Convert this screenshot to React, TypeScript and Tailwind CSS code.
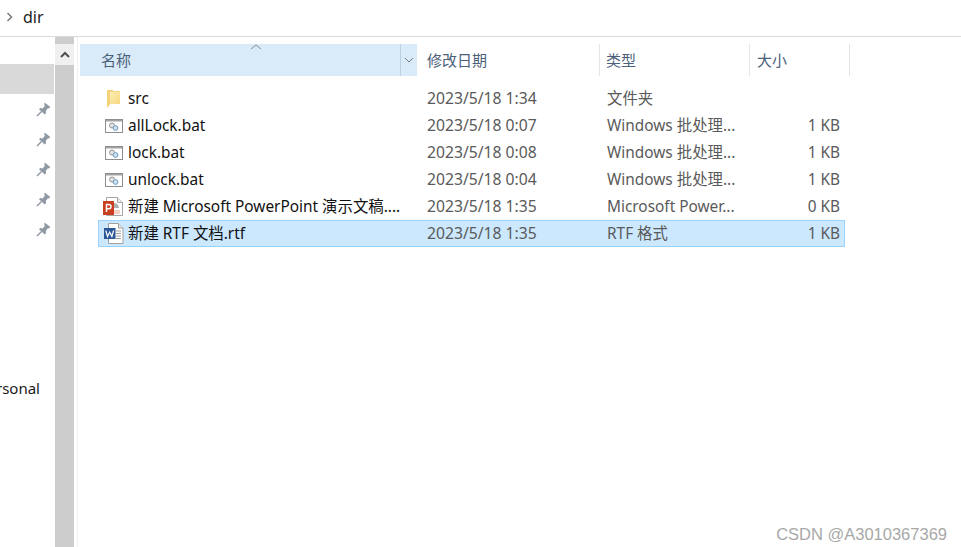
const font = { fontFamily: '"Noto Sans", "Noto Sans CJK SC", sans-serif' };

function PinIcon() {
  return (
    <svg width="15" height="15" viewBox="0 0 15 15" className="text-[#8e99a3]">
      <path d="M8.600.6 14.300 5l-1.300 1.400-1-.2-2.200 2.600.2 2.500-1.200 1.200L3 7.300l1.200-1.200 2.400.3 2.300-2.600-.6-1.200z" fill="currentColor" />
      <path d="M5.500 9.500 1 14" stroke="currentColor" strokeWidth="1.500" />
    </svg>
  );
}

function FolderIcon() {
  return (
    <svg width="13" height="18" viewBox="0 0 13 18">
      <defs>
        <linearGradient id="folder-front" x1="0" y1="0" x2="1" y2="1">
          <stop offset="0" stopColor="#fdeeb6" />
          <stop offset="1" stopColor="#f6d77f" />
        </linearGradient>
      </defs>
      <path d="M0.500 0h5l1 1H13v13H3l-2.500 3.500z" fill="#eec766" />
      <path d="M3 1.500h10V14H3z" fill="url(#folder-front)" />
      <path d="M0 0h3v14l-2.500 3.500H0z" fill="#f3d27a" />
    </svg>
  );
}

function BatIcon() {
  return (
    <svg width="18" height="14" viewBox="0 0 18 14">
      <rect x="0.500" y="0.500" width="17" height="13" fill="#fff" stroke="#8e8e8e" />
      <rect x="1" y="1" width="16" height="1.500" fill="#a3a3a3" />
      <circle cx="7" cy="6.500" r="2.500" fill="#e4e4e4" stroke="#959595" />
      <circle cx="10.500" cy="9" r="2.400" fill="#cfe0ee" stroke="#6f9cc0" />
    </svg>
  );
}

function PptIcon() {
  return (
    <svg width="21" height="20" viewBox="0 0 21 20">
      <path d="M3.500 0.500h11l5 5v13h-16z" fill="#fff" stroke="#a5a5a5" />
      <path d="M14.500 0.500v5h5" fill="#ececec" stroke="#a5a5a5" />
      <path d="M11 6v5h5a5 5 0 0 0-5-5z" fill="#b0b0b0" />
      <path d="M11 14h6M11 16h6" stroke="#e9a58d" strokeWidth="1.200" />
      <rect x="0" y="4" width="11" height="14" fill="#c8401f" />
      <path d="M3.500 15V7.500h2.400a2 2 0 0 1 0 4.200H3.500" fill="none" stroke="#fff" strokeWidth="1.500" />
    </svg>
  );
}

function WordIcon() {
  return (
    <svg width="20" height="21" viewBox="0 0 20 21">
      <path d="M4.500 0.500h10l4.500 4.500v15.500h-14.500z" fill="#fff" stroke="#a0a0a0" />
      <path d="M14.500 0.500v4.500h4.500" fill="#ececec" stroke="#a0a0a0" />
      <path d="M12 8h5M12 10.500h5M12 13h5M12 15.500h5" stroke="#a0a0a0" />
      <rect x="0" y="5" width="11.500" height="11" fill="#2b5797" />
      <path d="M1.800 7.500l1.700 6 2.200-4.500 2.200 4.500 1.700-6" fill="none" stroke="#fff" strokeWidth="1.200" />
    </svg>
  );
}

const rows = [
  { name: "src", date: "2023/5/18 1:34", type: "文件夹", size: "", icon: <FolderIcon /> },
  { name: "allLock.bat", date: "2023/5/18 0:07", type: "Windows 批处理...", size: "1 KB", icon: <BatIcon /> },
  { name: "lock.bat", date: "2023/5/18 0:08", type: "Windows 批处理...", size: "1 KB", icon: <BatIcon /> },
  { name: "unlock.bat", date: "2023/5/18 0:04", type: "Windows 批处理...", size: "1 KB", icon: <BatIcon /> },
  { name: "新建 Microsoft PowerPoint 演示文稿....", date: "2023/5/18 1:35", type: "Microsoft Power...", size: "0 KB", icon: <PptIcon /> },
  { name: "新建 RTF 文档.rtf", date: "2023/5/18 1:35", type: "RTF 格式", size: "1 KB", icon: <WordIcon />, selected: true },
];

export default function App() {
  return (
    <div className="relative h-[547px] w-[961px] overflow-hidden bg-white text-[15.4px] text-black" style={font}>
      {/* address bar */}
      <div className="flex h-[37px] items-center border-b border-[#d9d9d9] pb-[2px]">
        <svg width="8" height="10" viewBox="0 0 8 10" className="ml-[6px]">
          <path d="M1.500 1 5.500 5 1.500 9" fill="none" stroke="#7a7a7a" strokeWidth="1.500" />
        </svg>
        <span className="ml-[9px] text-[16px] text-[#222]">dir</span>
      </div>

      <div className="flex h-[510px]">
        {/* nav pane */}
        <div className="flex w-[55px] shrink-0 flex-col overflow-hidden pt-[27px]">
          <div className="h-[30px] w-[54px] shrink-0 bg-[#d9d9d9]" />
          <div className="flex flex-col items-end pr-[4px]">
            {[0, 1, 2, 3, 4].map((i) => (
              <div key={i} className="flex h-[30px] w-full items-center justify-end">
                <PinIcon />
              </div>
            ))}
          </div>
          <div className="mt-[133px] flex w-[40px] justify-end text-[15px] text-[#1a1a1a]">
            <span className="whitespace-nowrap">rsonal</span>
          </div>
        </div>

        {/* scrollbar */}
        <div className="flex w-[19px] shrink-0 flex-col bg-[#cdcdcd] pt-[7px]">
          <div className="flex h-[21px] items-center justify-center bg-[#f0f0f0]">
            <svg width="10" height="7" viewBox="0 0 10 7">
              <path d="M1 6 5 2l4 4" fill="none" stroke="#505050" strokeWidth="2" />
            </svg>
          </div>
        </div>
        <div className="ml-[3px] w-px shrink-0 bg-[#f0f0f0]" />

        {/* file list */}
        <div className="ml-[2px] flex-1 pt-[7px]">
          <div className="flex h-[32px] text-[15px] text-[#4c607a]">
            <div className="relative flex w-[337px] items-center bg-[#d9ebf9] pl-[21px]">
              名称
              <svg width="12" height="6" viewBox="0 0 12 6" className="absolute left-[170px] top-0">
                <path d="M1 5 6 1l5 4" fill="none" stroke="#8a8a8a" />
              </svg>
              <div className="absolute right-0 top-0 flex h-full w-[17px] items-center justify-center border-l border-[#bcd0e2]">
                <svg width="10" height="6" viewBox="0 0 10 6">
                  <path d="M1 1l4 4 4-4" fill="none" stroke="#7a7a7a" />
                </svg>
              </div>
            </div>
            <div className="flex w-[183px] items-center border-r border-[#e5e5e5] pl-[10px]">修改日期</div>
            <div className="flex w-[150px] items-center border-r border-[#e5e5e5] pl-[6px]">类型</div>
            <div className="flex w-[100px] items-center border-r border-[#e5e5e5] pl-[7px]">大小</div>
          </div>

          <div className="ml-[18px] mt-[9px] flex w-[747px] flex-col">
            {rows.map((r) => (
              <div
                key={r.name}
                className={
                  r.selected
                    ? "flex h-[27px] items-center border border-[#99d1ff] bg-[#cce8ff] text-[#111]"
                    : "flex h-[27px] items-center border border-transparent text-[#111]"
                }
              >
                <div className="flex w-[29px] shrink-0 justify-center">{r.icon}</div>
                <div className="w-[299px] shrink-0 overflow-hidden whitespace-nowrap">{r.name}</div>
                <div className="w-[180px] shrink-0 text-[15.7px] text-[#5a5a5a]">{r.date}</div>
                <div className="w-[153px] shrink-0 whitespace-nowrap text-[#5a5a5a]">{r.type}</div>
                <div className="w-[80px] shrink-0 text-right text-[#5a5a5a]">{r.size}</div>
              </div>
            ))}
          </div>
        </div>
      </div>

      {/* watermark */}
      <div
        className="absolute right-[14px] top-[522px] text-[16.5px] text-[#a8a8a8]"
        style={{ fontFamily: '"Liberation Sans", sans-serif' }}
      >
        CSDN @A3010367369
      </div>
    </div>
  );
}
